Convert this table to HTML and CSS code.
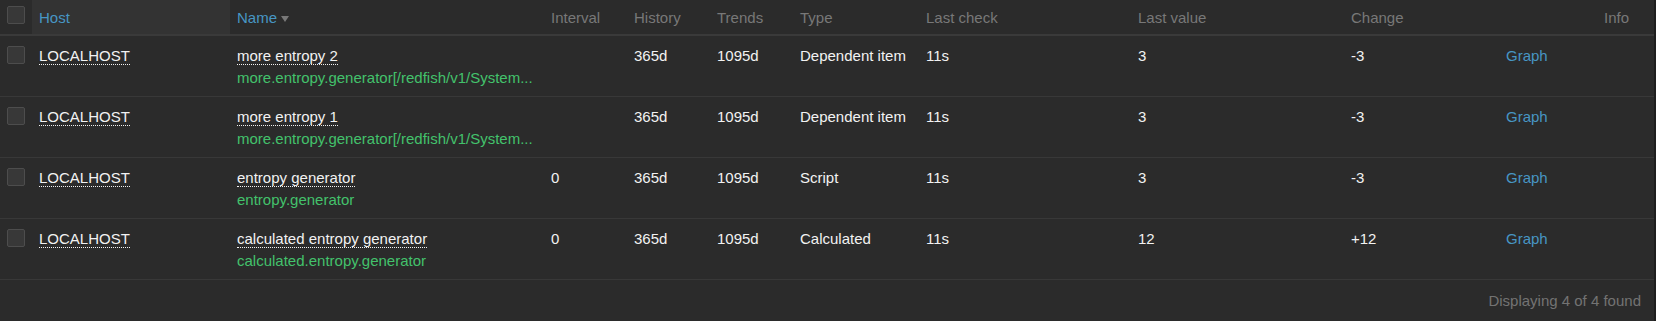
FILE: index.html
```html
<!DOCTYPE html>
<html>
<head>
<meta charset="utf-8">
<link rel="stylesheet" href="styles.css">
</head>
<body>
<div class="page">
  <table class="list">
    <colgroup>
      <col class="c-check"><col class="c-host"><col class="c-name"><col class="c-interval"><col class="c-history"><col class="c-trends"><col class="c-type"><col class="c-lastcheck"><col class="c-lastvalue"><col class="c-change"><col class="c-graph"><col class="c-info">
    </colgroup>
    <thead>
      <tr>
        <th><span class="checkbox"></span></th>
        <th class="hovered"><a class="sort">Host</a></th>
        <th><a class="sort">Name</a><span class="arrow"></span></th>
        <th>Interval</th>
        <th>History</th>
        <th>Trends</th>
        <th>Type</th>
        <th>Last check</th>
        <th>Last value</th>
        <th>Change</th>
        <th></th>
        <th>Info</th>
      </tr>
    </thead>
    <tbody>
      <tr>
        <td><span class="checkbox"></span></td>
        <td><a class="action">LOCALHOST</a></td>
        <td><a class="action">more entropy 2</a><div class="key">more.entropy.generator[/redfish/v1/System...</div></td>
        <td></td>
        <td>365d</td>
        <td>1095d</td>
        <td>Dependent item</td>
        <td>11s</td>
        <td>3</td>
        <td>-3</td>
        <td><a class="link">Graph</a></td>
        <td></td>
      </tr>
      <tr>
        <td><span class="checkbox"></span></td>
        <td><a class="action">LOCALHOST</a></td>
        <td><a class="action">more entropy 1</a><div class="key">more.entropy.generator[/redfish/v1/System...</div></td>
        <td></td>
        <td>365d</td>
        <td>1095d</td>
        <td>Dependent item</td>
        <td>11s</td>
        <td>3</td>
        <td>-3</td>
        <td><a class="link">Graph</a></td>
        <td></td>
      </tr>
      <tr>
        <td><span class="checkbox"></span></td>
        <td><a class="action">LOCALHOST</a></td>
        <td><a class="action">entropy generator</a><div class="key">entropy.generator</div></td>
        <td>0</td>
        <td>365d</td>
        <td>1095d</td>
        <td>Script</td>
        <td>11s</td>
        <td>3</td>
        <td>-3</td>
        <td><a class="link">Graph</a></td>
        <td></td>
      </tr>
      <tr>
        <td><span class="checkbox"></span></td>
        <td><a class="action">LOCALHOST</a></td>
        <td><a class="action">calculated entropy generator</a><div class="key">calculated.entropy.generator</div></td>
        <td>0</td>
        <td>365d</td>
        <td>1095d</td>
        <td>Calculated</td>
        <td>11s</td>
        <td>12</td>
        <td>+12</td>
        <td><a class="link">Graph</a></td>
        <td></td>
      </tr>
    </tbody>
  </table>
  <div class="paging">Displaying 4 of 4 found</div>
</div>
</body>
</html>
```

FILE: styles.css
```css
html, body {
  margin: 0;
  padding: 0;
  background: #2b2b2b;
}
body {
  font-family: "Liberation Sans", Arial, sans-serif;
  font-size: 15px;
  color: #f2f2f2;
  width: 1656px;
  height: 321px;
  overflow: hidden;
}
.page {
  width: 1654px;
  height: 321px;
  border-right: 2px solid #1e1e1e;
}
.list {
  width: 1654px;
  border-collapse: collapse;
  table-layout: fixed;
}
.c-check { width: 32px; }
.c-host { width: 198px; }
.c-name { width: 314px; }
.c-interval { width: 83px; }
.c-history { width: 83px; }
.c-trends { width: 83px; }
.c-type { width: 126px; }
.c-lastcheck { width: 212px; }
.c-lastvalue { width: 213px; }
.c-change { width: 155px; }
.c-graph { width: 98px; }
.c-info { width: 57px; }

th {
  height: 34px;
  box-sizing: border-box;
  padding: 6px 7px 5px;
  line-height: 23px;
  font-weight: normal;
  text-align: left;
  color: #787878;
  border-bottom: 2px solid #3a3a3a;
  vertical-align: top;
  white-space: nowrap;
}
th.hovered { background: #333333; }
td {
  padding: 8px 7px 7px;
  line-height: 23px;
  vertical-align: top;
  border-bottom: 1px solid #383838;
  white-space: nowrap;
  overflow: hidden;
}
td:first-child { padding-top: 10px; }
.checkbox {
  display: block;
  width: 16px;
  height: 16px;
  background: #383838;
  border: 1px solid #4d4d4d;
  border-radius: 2px;
}
.sort { color: #4796c4; }
.arrow {
  display: inline-block;
  margin-left: 4px;
  width: 0;
  height: 0;
  border-left: 4.5px solid transparent;
  border-right: 4.5px solid transparent;
  border-top: 6px solid #787878;
  vertical-align: 1px;
}
.action {
  color: #f2f2f2;
  border-bottom: 1px dotted #f2f2f2;
}
.key {
  color: #43c26b;
  margin-top: -1px;
}
.link { color: #4796c4; }
.paging {
  text-align: right;
  padding: 9px 13px 0 0;
  line-height: 23px;
  color: #737373;
}
```
